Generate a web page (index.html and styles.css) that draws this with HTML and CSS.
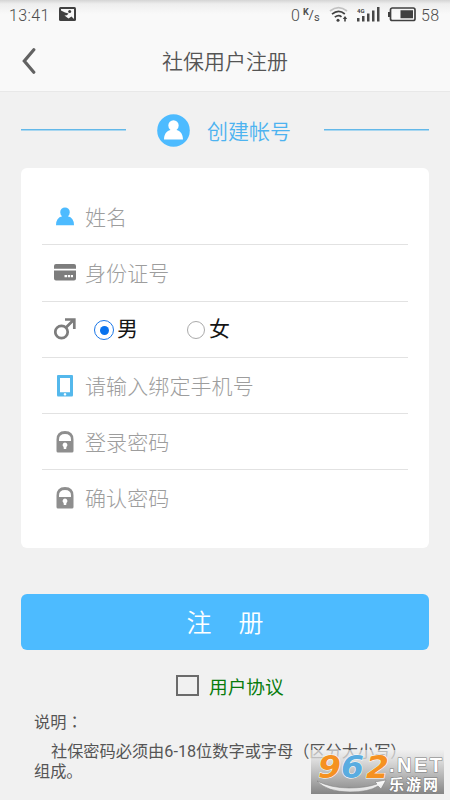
FILE: index.html
```html
<!DOCTYPE html>
<html lang="zh-CN">
<head>
<meta charset="utf-8">
<meta name="viewport" content="width=device-width">
<title>社保用户注册</title>
<link rel="stylesheet" href="styles.css">
</head>
<body>
<header class="top">
  <div class="status">
    <span class="clock">13:41</span>
    <svg class="picture" width="17" height="14" viewBox="0 0 17 14"><rect width="17" height="14" rx="1.5" fill="#404040"/><path d="M2 2H15V12L12.500 9.500 9.500 11.500 5.500 8.500 8 8.200 9.500 6.500 6 5.500 2 3.500Z" fill="#f7f7f7"/><circle cx="10.700" cy="4.600" r="1.500" fill="#404040"/></svg>
    <span class="rate">0</span>
    <span class="unit"><span class="unit-k">K</span>/<span class="unit-s">s</span></span>
    <svg class="wifi" width="19" height="17" viewBox="0 0 19 17" fill="none"><path d="M1 5Q9.500-1.800 18 5" stroke="#c2c2c2" stroke-width="1.700"/><path d="M3 8.200Q9.500 2.800 15.800 8M5.800 11.200Q9.500 8.200 12.500 10.800" stroke="#414141" stroke-width="1.700"/><circle cx="9" cy="14.300" r="1.500" fill="#414141"/><path d="M16 10 18.200 13H16.800V15.500H15.200V13H13.800Z" fill="#414141"/></svg>
    <svg class="signal" width="23" height="15" viewBox="0 0 23 15"><text x="0" y="5.500" class="network">4G</text><path d="M0 11H2.500V14.500H0ZM5 9H7.500V14.500H5ZM10 6.500H12.500V14.500H10ZM15 3.500H17.500V14.500H15ZM20 0H22.500V14.500H20Z" fill="#484848"/></svg>
    <svg class="battery" width="28" height="15" viewBox="0 0 28 15"><rect x="2.500" y="1" width="24.500" height="12.500" rx="1.800" fill="none" stroke="#404040" stroke-width="1.700"/><path d="M0 5H2V10H0ZM12.500 3.300H25V11.200H12.500Z" fill="#404040"/></svg>
    <span class="charge">58</span>
  </div>
  <nav class="title-bar">
    <svg class="back" width="14" height="26" viewBox="0 0 14 26"><path d="M11.800 1.800 2.300 13 11.800 24.200" fill="none" stroke="#626262" stroke-width="3.200" stroke-linecap="round"/></svg>
    <h1>社保用户注册</h1>
  </nav>
</header>
<main>
  <div class="heading">
    <i class="rule"></i>
    <svg class="avatar" width="33" height="33" viewBox="0 0 33 33"><circle cx="16.500" cy="16.500" r="16.300" fill="#4dbbff"/><path d="M11.300 11.500a5.200 5.200 0 1 1 10.400 0q0 3-2.200 4.500C24 17.300 25.800 20.500 26 25.500H7C7.200 20.500 9 17.300 13.500 16Q11.300 14.500 11.300 11.500Z" fill="#fff"/></svg>
    <h2>创建帐号</h2>
    <i class="rule"></i>
  </div>
  <form class="card">
    <label class="row"><span class="icon"><svg width="18" height="19" viewBox="0 0 18 19"><path d="M4.200 5.200a4.800 4.800 0 1 1 9.600 0q0 2.500-2 4Q18 10.500 18 18.200H0Q0 10.500 6.200 9.200 4.200 7.700 4.200 5.200Z" fill="#4dbbff"/></svg></span><span class="hint">姓名</span></label>
    <label class="row"><span class="icon"><svg width="22" height="17" viewBox="0 0 22 17"><path d="M0 4.800V2Q0 0 2 0H20Q22 0 22 2V4.800ZM0 6.600H22V14.500Q22 16.500 20 16.500H2Q0 16.500 0 14.500Z" fill="#7d7d7d"/><path d="M10.500 11H13V13.200H10.500ZM13.800 11H16V13.200H13.800ZM16.800 11H19V13.200H16.800Z" fill="#fff"/></svg></span><span class="hint">身份证号</span></label>
    <div class="row"><span class="icon"><svg width="22" height="22" viewBox="0 0 22 22"><g fill="none" stroke="#7d7d7d" stroke-width="2.700"><circle cx="7.500" cy="14" r="6.200"/><path d="M12 9.500 19.500 2M11 1.500H20.300V11"/></g></svg></span>
      <span class="radio checked"></span><span class="choice">男</span><span class="radio female"></span><span class="choice">女</span></div>
    <label class="row"><span class="icon"><svg width="16" height="22" viewBox="0 0 16 22"><path fill-rule="evenodd" d="M1 0H15Q16 0 16 1V20Q16 21.500 15 21.500H1Q0 21.500 0 20V1Q0 0 1 0ZM3 3V17.200H13V3ZM8 18a1.300 1.300 0 1 0 .01 0Z" fill="#54b8ec"/></svg></span><span class="hint">请输入绑定手机号</span></label>
    <label class="row"><span class="icon"><svg width="18" height="22" viewBox="0 0 18 22"><path fill-rule="evenodd" d="M.5 10V8.500Q.5 0 9 0T17.500 8.500V20Q17.500 21.500 16 21.500H2Q.5 21.500 .5 20ZM3 10H15V8.500Q15 3 9 3T3 8.500ZM9 11.500a2.500 2.500 0 0 0-1.400 4.500L7.800 18H10.200L10.400 16A2.500 2.500 0 0 0 9 11.500Z" fill="#8e8e8e"/></svg></span><span class="hint">登录密码</span></label>
    <label class="row"><span class="icon"><svg width="18" height="22" viewBox="0 0 18 22"><path fill-rule="evenodd" d="M.5 10V8.500Q.5 0 9 0T17.500 8.500V20Q17.500 21.500 16 21.500H2Q.5 21.500 .5 20ZM3 10H15V8.500Q15 3 9 3T3 8.500ZM9 11.500a2.500 2.500 0 0 0-1.400 4.500L7.800 18H10.200L10.400 16A2.500 2.500 0 0 0 9 11.500Z" fill="#8e8e8e"/></svg></span><span class="hint">确认密码</span></label>
  </form>
  <button class="submit"><span>注</span><span>册</span></button>
  <div class="agreement"><span class="checkbox"></span><span class="agreement-text">用户协议</span></div>
  <section class="notes">
    <p class="notes-title">说明<span class="colon" lang="zh-TW">：</span></p>
    <p class="notes-text">社保密码必须由6-18位数字或字母（区分大小写）<br>组成。</p>
  </section>
</main>
<svg class="watermark" width="134" height="45" viewBox="0 0 134 45">
  <defs>
    <linearGradient id="shade" x2="0" y2="1"><stop offset="0" stop-color="#eee" stop-opacity=".65"/><stop offset=".35" stop-color="#ccc" stop-opacity=".9"/><stop offset="1" stop-color="#858585"/></linearGradient>
    <linearGradient id="silver" x2="0" y2="1"><stop stop-color="#fff"/><stop offset="1" stop-color="#ddd"/></linearGradient>
  </defs>
  <rect width="133" height="44" fill="url(#shade)"/>
  <path d="M6 31Q16 42 39 42 58 42 67 36L70 39 75 30 64 32 66 34Q55 38 38 38 20 38 6 31Z" fill="url(#silver)" stroke="#777" stroke-width=".5"/>
  <g class="digits"><text x="7" y="28" textLength="23" lengthAdjust="spacingAndGlyphs" fill="#f59121">9</text><text x="30" y="28" textLength="23" lengthAdjust="spacingAndGlyphs" fill="#59ace0">6</text><text x="55" y="28" textLength="23" lengthAdjust="spacingAndGlyphs" fill="#f59121">2</text></g>
  <text x="78" y="22" class="net" textLength="53">.NET</text>
  <text x="78" y="39.500" class="site" textLength="49">乐游网</text>
</svg>
</body>
</html>
```
FILE: styles.css
```css
* { box-sizing: border-box; }
body {
  margin: 0;
  width: 450px;
  height: 800px;
  position: relative;
  overflow: hidden;
  background: #f1f1f1;
  color: #555;
  font-family: Roboto, "Noto Sans CJK SC", sans-serif;
}
h1, h2, p { margin: 0; font-weight: 400; }
svg { display: block; flex: none; }
.top {
  height: 92px;
  border-bottom: 1px solid #e8e8e8;
  background: linear-gradient(#d4d4d4, #eee 4px, #f9f9f9 14px);
}
.status { height: 30px; display: flex; align-items: center; color: #4c4c4c; font-size: 16px; font-weight: 300; line-height: 30px; }
.clock { width: 51px; padding-left: 9px; padding-top: 2px; letter-spacing: .35px; }
.picture { margin-left: 8px; margin-top: -2px; }
.rate { margin-left: 215px; padding-top: 2px; }
.unit { width: 16px; margin-left: 3px; font-size: 13px; font-weight: 400; line-height: 20px; white-space: nowrap; }
.unit-k { font-size: 9px; font-weight: 700; position: relative; top: -4px; }
.unit-s { font-size: 11px; position: relative; top: 2px; }
.wifi { margin-left: 10px; margin-top: -2px; }
.signal { margin-left: 9px; margin-top: -2px; }
.network { font: 700 6px Roboto, sans-serif; fill: #444; }
.battery { margin-left: 8px; margin-top: -1px; }
.charge { margin-left: 5px; padding-top: 2px; letter-spacing: .4px; }
.title-bar { height: 61px; display: grid; grid-template-columns: 22px 1fr 22px; align-items: center; }
.back { margin-left: 22px; }
h1 { margin-top: -1px; text-align: center; font: 350 21px/30px "Noto Sans CJK SC", sans-serif; }
.heading { height: 76px; padding: 0 21px; display: flex; align-items: center; color: #4db3f0; }
.rule { flex: none; width: 105px; height: 2px; margin-top: -1px; background: linear-gradient(#63b8e9 50%, #a9d7f0 50%); }
.avatar { margin-left: 31px; }
h2 { flex: none; margin-left: 17px; margin-right: 33px; font: 350 21px/30px "Noto Sans CJK SC", sans-serif; width: 84px; }
.card { width: 408px; height: 380px; margin-left: 21px; padding: 21px; border-radius: 6px; background: #fff; }
.row { height: 56.300px; display: flex; align-items: center; border-bottom: 1px solid #e2e2e2; }
.row:last-child { border-bottom-color: transparent; }
.icon { width: 45px; height: 22px; flex: none; display: grid; place-items: center; margin-right: -2px; }
.hint { margin-top: -2px; color: #9d9d9d; font: 300 21px/30px "Noto Sans CJK SC", sans-serif; letter-spacing: .1px; }
.radio { width: 18px; height: 18px; margin-left: 9px; margin-top: 2px; border: 1px solid #aaa; border-radius: 50%; display: grid; place-items: center; }
.radio.checked { width: 20px; height: 20px; border: 1.500px solid #1976e8; }
.radio.checked::after { content: ""; width: 9px; height: 9px; border-radius: 50%; background: #0872ee; }
.choice { color: #151515; font: 400 21px/30px "Noto Sans CJK SC", sans-serif; margin-left: 3px; margin-top: -4px; }
.radio.female { margin-left: 49px; }
.radio.female + .choice { margin-left: 4px; }
.submit { width: 408px; height: 56px; margin: 46px 0 0 21px; padding: 0 0 3px; border: 0; border-radius: 6px; background: #4dbbff; color: #fff; display: flex; align-items: center; justify-content: center; gap: 27px; font: 350 25px/36px "Noto Sans CJK SC", sans-serif; }
.agreement { height: 28px; margin: 22px 0 0 176px; display: flex; align-items: center; gap: 10px; color: #087c0c; font-size: 18.700px; line-height: 28px; }
.agreement-text { padding-top: 3px; }
.checkbox { width: 23px; height: 21px; border: 2px solid #6b6b6b; margin-top: -1px; }
.notes { padding: 11px 0 0 34px; font-size: 16.200px; line-height: 20px; }
.colon { font-family: "Noto Sans CJK TC", sans-serif; }
.notes-text { margin-top: 9px; text-indent: 17px; white-space: nowrap; }
.watermark { position: absolute; left: 311px; top: 750px; }
.digits { font: italic 700 32px "DejaVu Sans", sans-serif; stroke: #fff; stroke-width: 1px; paint-order: stroke; }
.net { font: 700 20px "Liberation Sans", sans-serif; fill: #fff; stroke: #777; stroke-width: 1px; paint-order: stroke; }
.site { font: 700 15px "Noto Sans CJK SC", sans-serif; fill: #fff; stroke: #777; stroke-width: 1px; paint-order: stroke; }
```
